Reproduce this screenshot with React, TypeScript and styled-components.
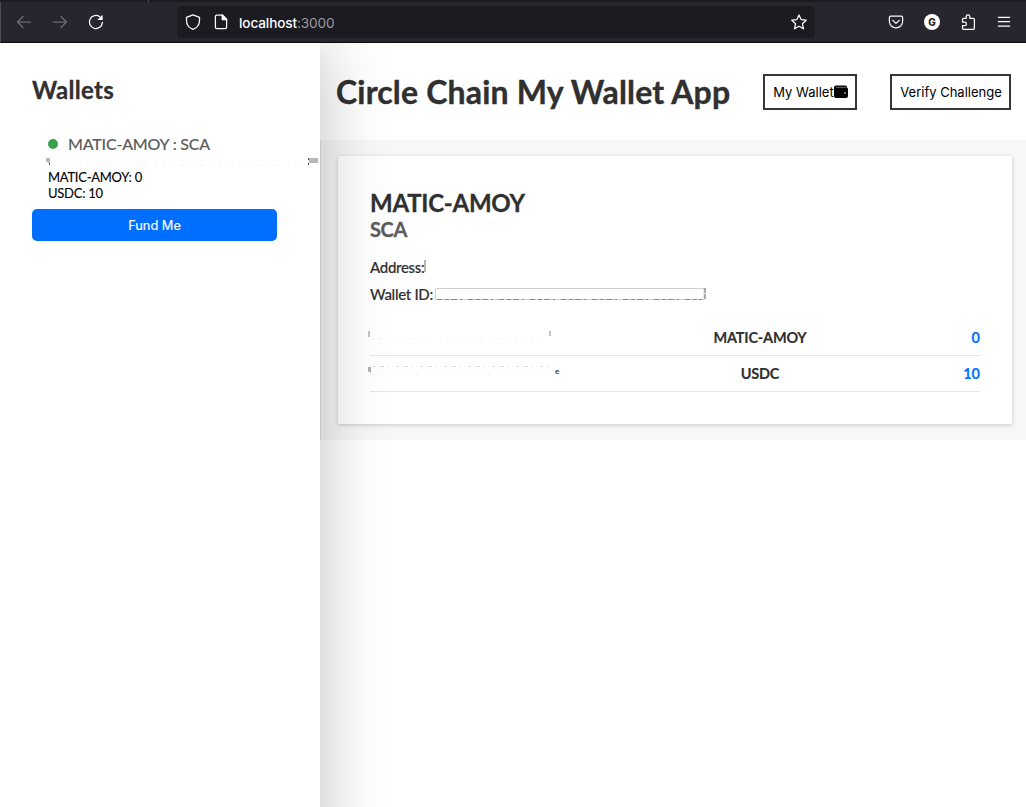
import React from "react";
import styled, { createGlobalStyle } from "styled-components";

const GlobalStyle = createGlobalStyle`
  *, *::before, *::after { box-sizing: border-box; }
  body { margin: 0; background: #fff; font-family: Lato, sans-serif; color: #303030; -webkit-font-smoothing: antialiased; }
  h1, h2, h3, p { margin: 0; }
  button { font-family: Inter, sans-serif; }
`;

const Page = styled.div`
  display: flex;
  flex-direction: column;
  width: 1026px;
  height: 807px;
  overflow: hidden;
`;

const TabEdge = styled.div`
  flex: none;
  height: 2px;
  padding-left: 148px;
  background: #1c1b22;
  &::before {
    content: "";
    display: block;
    width: 1px;
    height: 2px;
    background: #55545c;
  }
`;

const BrowserBar = styled.header`
  flex: none;
  display: flex;
  align-items: center;
  height: 41px;
  padding: 0 14px 0 15px;
  background: #27262f;
  border-bottom: 1px solid #0c0c0d;
  border-left: 1px solid #4a4a50;
  color: #fbfbfe;
`;

const Tools = styled.div<{ $gap: number }>`
  display: flex;
  align-items: center;
  gap: ${(p) => p.$gap}px;
`;

const Glyph = styled.svg<{ $dim?: boolean }>`
  display: block;
  flex: none;
  width: 16px;
  height: 16px;
  overflow: visible;
  fill: none;
  stroke: ${(p) => (p.$dim ? "#6c6b73" : "#fbfbfe")};
  stroke-width: 1.25;
  stroke-linecap: round;
  stroke-linejoin: round;
`;

const AddressBar = styled.div`
  display: flex;
  align-items: center;
  width: 638px;
  height: 32px;
  margin: 0 73px 0 73px;
  padding: 0 8px;
  border-radius: 4px;
  background: #1c1b22;
`;

const Url = styled.span`
  flex: 1;
  margin: 2px 0 0 10px;
  font: 400 13.6px/20px Inter, sans-serif;
  letter-spacing: -0.12px;
  color: #9a9a9f;
  b { font-weight: 500; color: #fbfbfe; }
`;

const Avatar = styled.span`
  display: flex;
  align-items: center;
  justify-content: center;
  width: 16px;
  height: 16px;
  border-radius: 50%;
  background: #fff;
  color: #27262f;
  font: 800 10px/16px Inter, sans-serif;
`;

const Body = styled.div`
  flex: 1;
  display: flex;
  min-height: 0;
  overflow: hidden;
`;

const Sidebar = styled.aside`
  position: relative;
  z-index: 1;
  flex: none;
  width: 320px;
  margin-bottom: -80px;
  padding: 32px 43px 0 32px;
  background: #fff;
  box-shadow: 0 0 64px rgba(0, 0, 0, 0.25);
`;

const SidebarTitle = styled.h2`
  font-size: 24px;
  line-height: 30px;
  letter-spacing: 0.3px;
  -webkit-text-stroke: 0.3px;
`;

const WalletItem = styled.div`
  padding: 29px 0 0 16px;
  color: #000;
  font-size: 13px;
  line-height: 16px;
  letter-spacing: -0.26px;
  -webkit-text-stroke: 0.1px;
`;

const WalletName = styled.div`
  display: flex;
  align-items: center;
  gap: 10px;
  height: 20px;
  color: #5c5c5c;
  font-size: 16px;
  font-weight: 500;
  letter-spacing: -0.2px;
  white-space: nowrap;
`;

const StatusDot = styled.i`
  width: 10px;
  height: 10px;
  border-radius: 50%;
  background: #38a04a;
`;

const Masked = styled.svg`
  display: block;
  flex: none;
  overflow: visible;
`;

const FundButton = styled.button`
  display: block;
  width: 245px;
  height: 32px;
  margin-top: 8px;
  padding: 1px 0 0;
  border: 0;
  border-radius: 5px;
  background: #006eff;
  color: #fff;
  font-size: 12.8px;
  -webkit-text-stroke: 0.15px;
`;

const Main = styled.main`
  flex: 1;
  min-width: 0;
`;

const TopBar = styled.div`
  display: flex;
  align-items: center;
  height: 97px;
  padding: 1px 15px 0 16px;
`;

const AppTitle = styled.h1`
  flex: 1;
  min-width: 0;
  font-size: 32px;
  line-height: 40px;
  letter-spacing: 0.17px;
  white-space: nowrap;
  -webkit-text-stroke: 0.4px;
`;

const OutlineButton = styled.button<{ $width: number }>`
  display: flex;
  flex: none;
  align-items: center;
  justify-content: center;
  width: ${(p) => p.$width}px;
  height: 36px;
  margin-left: 33px;
  padding: 0 0 1px 1px;
  border: 2px solid #363636;
  background: #fff;
  color: #000;
  font-size: 13px;
  white-space: nowrap;
`;

const Content = styled.section`
  height: 300px;
  padding: 16px 14px 16px 17px;
  border-left: 1px solid #e5e5e5;
  background: #f7f7f7;
`;

const Card = styled.article`
  height: 268px;
  padding: 32px 32px 0;
  background: #fff;
  box-shadow: 0 1px 4px rgba(0, 0, 0, 0.2);
`;

const Network = styled.h2`
  font-size: 24px;
  line-height: 29px;
  letter-spacing: -0.25px;
  -webkit-text-stroke: 0.3px;
`;

const Kind = styled.h3`
  margin-bottom: 12px;
  color: #5c5c5c;
  font-size: 20px;
  line-height: 24px;
  letter-spacing: -0.4px;
  -webkit-text-stroke: 0.3px;
`;

const Detail = styled.p`
  display: flex;
  align-items: center;
  height: 27px;
  font-size: 15px;
  font-weight: 500;
  letter-spacing: -0.3px;
  white-space: nowrap;
  -webkit-text-stroke: 0.15px;
`;

const Tokens = styled.div`
  margin-top: 13px;
`;

const TokenRow = styled.div`
  display: grid;
  grid-template-columns: 282px 216px 112px;
  align-items: center;
  height: 36px;
  padding-bottom: 1px;
  border-bottom: 1px solid #e6e6e6;
  font-size: 14.5px;
  line-height: 17px;
  font-weight: 700;
  letter-spacing: -0.2px;
  -webkit-text-stroke: 0.15px;
`;

const Symbol = styled.span`
  padding-bottom: 2px;
  text-align: center;
`;

const Amount = styled.span`
  padding-bottom: 2px;
  text-align: right;
  letter-spacing: 0;
  color: #0073ff;
`;

function WalletIcon() {
  return (
    <svg width="14" height="14" viewBox="0 0 14 14">
      <path d="M2 0.5H11.5Q13 .5 13 2V2.5H13Q14 3 14 4V11Q14 13 12 13H2Q0 13 0 11V2.5Q0 .5 2 .5Z" />
      <path d="M2 2.3H12.5" stroke="#888" strokeWidth=".8" />
      <circle cx="11" cy="8" r=".8" fill="#fff" />
    </svg>
  );
}

export default function App() {
  return (
    <Page>
      <GlobalStyle />
      <TabEdge />
      <BrowserBar>
        <Tools $gap={20}>
          <Glyph $dim><path d="M14.5 8H1.5M7 2.5L1.5 8L7 13.5" /></Glyph>
          <Glyph $dim><path d="M1.5 8H14.5M9 2.5L14.5 8L9 13.5" /></Glyph>
          <Glyph strokeWidth="1.5">
            <path d="M14.4 8.4A6.5 6.5 0 1 1 11.8 2.8" />
            <path d="M14.6 .8V6H9.4Z" fill="#fbfbfe" stroke="none" />
          </Glyph>
        </Tools>
        <AddressBar>
          <Tools $gap={12}>
            <Glyph><path d="M8 .8L14.5 3.3V6.5C14.5 11 12 13.8 8 15.4C4 13.8 1.5 11 1.5 6.5V3.3Z" /></Glyph>
            <Glyph>
              <path d="M3.8 1.2H9.6L13.6 5.2V13.2Q13.6 14.6 12.2 14.6H3.8Q2.4 14.6 2.4 13.2V2.6Q2.4 1.2 3.8 1.2Z" />
              <path d="M9.2 1V5.6H13.8Z" fill="#fbfbfe" />
            </Glyph>
          </Tools>
          <Url><b>localhost</b>:3000</Url>
          <Glyph><path d="M8 .9L10.1 5.6L15.2 6.2L11.4 9.7L12.5 14.8L8 12.3L3.5 14.8L4.6 9.7L.8 6.2L5.9 5.6Z" /></Glyph>
        </AddressBar>
        <Tools $gap={20}>
          <Glyph>
            <path d="M2.8 2H13.2Q14.6 2 14.6 3.4V7.5A6.6 6.4 0 0 1 1.4 7.5V3.4Q1.4 2 2.8 2Z" />
            <path d="M4.8 6.4L8 9.4L11.2 6.4" />
          </Glyph>
          <Avatar>G</Avatar>
          <Glyph>
            <path d="M3.6 4.4H6.2V2.6A1.8 1.8 0 0 1 9.8 2.6V4.4H13.3Q14.4 4.4 14.4 5.5V14.2Q14.4 15.3 13.3 15.3H3.6Q2.5 15.3 2.5 14.2V11.7H4.6A1.8 1.8 0 0 0 4.6 8.1H2.5V5.5Q2.5 4.4 3.6 4.4Z" />
          </Glyph>
          <Glyph><path d="M2.4 3.3H13.6M2.4 7.7H13.6M2.4 12.1H13.6" /></Glyph>
        </Tools>
      </BrowserBar>
      <Body>
        <Sidebar>
          <SidebarTitle>Wallets</SidebarTitle>
          <WalletItem>
            <WalletName><StatusDot />MATIC-AMOY : SCA</WalletName>
            <Masked width="270" height="15">
              <path d="M-2 4H2V9H0L-2 7ZM261 4H270V9H261Z" fill="#b8b8b8" />
              <path d="M1.5 9V11M260.5 9V11M260.5 4V6" stroke="#555" />
              <path d="M12 11.5H250" stroke="#f0f0f0" strokeDasharray="2 5 3 9" />
            </Masked>
            <div>MATIC-AMOY: 0</div>
            <div>USDC: 10</div>
          </WalletItem>
          <FundButton>Fund Me</FundButton>
        </Sidebar>
        <Main>
          <TopBar>
            <AppTitle>Circle Chain My Wallet App</AppTitle>
            <OutlineButton $width={94}>My Wallet<WalletIcon /></OutlineButton>
            <OutlineButton $width={121}>Verify Challenge</OutlineButton>
          </TopBar>
          <Content>
            <Card>
              <Network>MATIC-AMOY</Network>
              <Kind>SCA</Kind>
              <Detail>
                Address:
                <Masked width="4" height="16"><path d="M0 1V13" stroke="#b8b8b8" strokeWidth="2" /></Masked>
              </Detail>
              <Detail>
                Wallet ID:
                <Masked width="274" height="16">
                  <path d="M2.5 13.5V2.5H271V13.5Z" fill="#fff" stroke="#d0d0d0" />
                  <path d="M4 13.5H269" stroke="#888" strokeDasharray="5 3 4 2 6 3 2 6" />
                  <path d="M272 2V13" stroke="#aaa" strokeWidth="2" strokeDasharray="5 1" />
                </Masked>
              </Detail>
              <Tokens>
                <TokenRow>
                  <Masked width="200" height="36">
                    <path d="M-1 11V17M180 11V16" stroke="#b0b0b0" strokeWidth="1.5" />
                    <path d="M2 18.5H176" stroke="#f2f2f2" strokeDasharray="2 4 3 8" />
                  </Masked>
                  <Symbol>MATIC-AMOY</Symbol>
                  <Amount>0</Amount>
                </TokenRow>
                <TokenRow>
                  <Masked width="200" height="36">
                    <path d="M-2 11H1V17L-2 15Z" fill="#b0b0b0" />
                    <path d="M3 10.5H179" stroke="#d8d8d8" strokeDasharray="2 5 4 3 1 9" />
                    <path d="M3 18.5H183" stroke="#f2f2f2" strokeDasharray="2 5 3 8" />
                    <text x="185" y="18" fontSize="8" fill="#303030">e</text>
                  </Masked>
                  <Symbol>USDC</Symbol>
                  <Amount>10</Amount>
                </TokenRow>
              </Tokens>
            </Card>
          </Content>
        </Main>
      </Body>
    </Page>
  );
}
